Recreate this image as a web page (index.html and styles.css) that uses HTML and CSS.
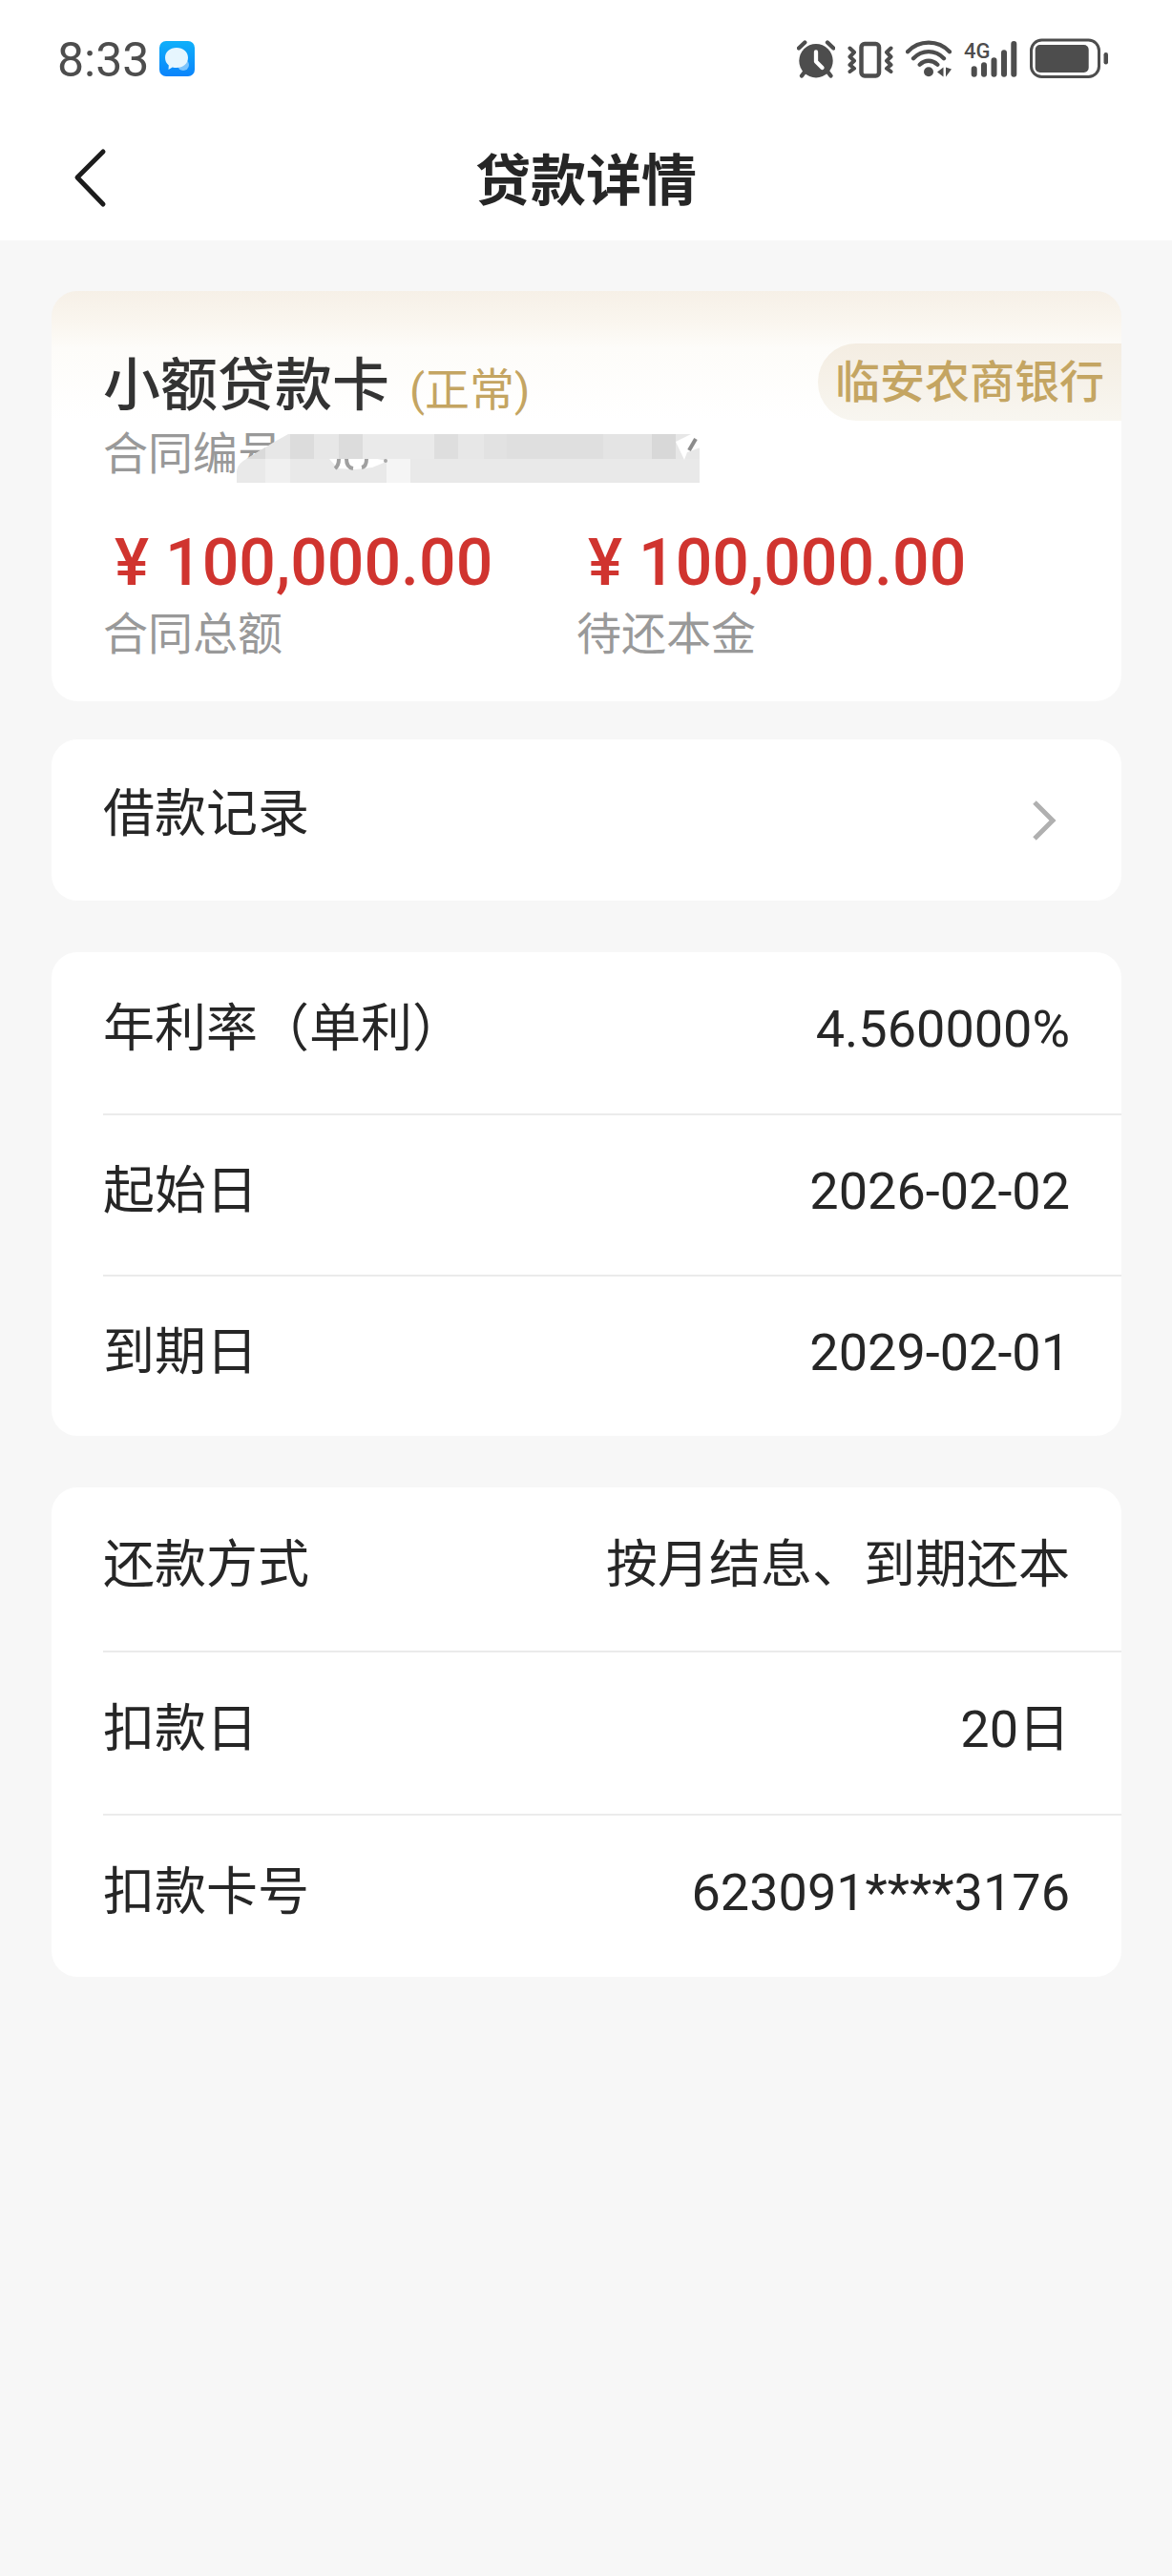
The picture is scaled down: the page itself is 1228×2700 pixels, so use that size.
FILE: index.html
```html
<!DOCTYPE html>
<html lang="zh-CN">
<head>
    <meta charset="UTF-8">
    <meta name="viewport" content="width=device-width, initial-scale=1.0">
    <title>贷款详情</title>
    <link rel="stylesheet" href="styles.css">
</head>
<body>
    <div class="status-bar">
        <span class="time">8:33</span>
        <svg class="app-icon" width="37" height="37" viewBox="0 0 37 37" aria-hidden="true">
            <defs>
                <linearGradient id="appBlue" x1="0" y1="0" x2="0" y2="1">
                    <stop offset="0" stop-color="#0fb0fa"/>
                    <stop offset="1" stop-color="#0b84fb"/>
                </linearGradient>
            </defs>
            <rect width="37" height="37" rx="7" fill="url(#appBlue)"/>
            <circle cx="25" cy="25" r="6" fill="#7cc4fc"/>
            <path d="M18 7c7 0 12 4.500 12 10.500S25 28 18 28c-1.500 0-3-.2-4.300-.6L9.500 30l.3-4.500C7.300 23.500 6 20.700 6 17.500 6 11.500 11 7 18 7z" fill="#e6f6fe"/>
        </svg>
        <div class="status-icons">
            <svg width="40" height="44" viewBox="0 0 40 44" aria-hidden="true">
                <circle cx="20" cy="24.700" r="17.700" fill="#4d4d4d"/>
                <path d="M2 11.500 8.300 5.500M32 5.500l6.300 6M8 36.500l-3 4M32.500 36.500l3 4" fill="none" stroke="#4d4d4d" stroke-width="4.300" stroke-linecap="round"/>
                <path d="M20 15.500v10l6.500 6.500" fill="none" stroke="#fff" stroke-width="4.300" stroke-linecap="round" stroke-linejoin="round"/>
            </svg>
            <svg width="48" height="44" viewBox="0 0 48 44" fill="none" stroke="#4d4d4d" aria-hidden="true">
                <rect x="14.500" y="7" width="18.500" height="33.500" rx="3.500" stroke-width="4.500"/>
                <path d="M2.500 11.500 7 15.800 2.500 20.500 7 24.700 2.500 29 7 32.700 2.500 36M45.500 11.500 41 15.800l4.500 4.700-4.500 4.200 4.500 4.300-4.500 3.700 4.500 3.300" stroke-width="4" stroke-linecap="round" stroke-linejoin="round"/>
            </svg>
            <svg width="48" height="44" viewBox="0 0 48 44" aria-hidden="true">
                <path d="M2 15.300C14 2.500 34 2.500 46 15.300M8 22.300c9-9.500 23-9.500 32 0M14.700 28.700c5.500-5.300 13-5.300 18.600 0" fill="none" stroke="#4d4d4d" stroke-width="4.300" stroke-linecap="round"/>
                <circle cx="24" cy="36.300" r="5" fill="#4d4d4d"/>
                <path d="M33 36.500 39.500 31.500v10zM42 31.500v10l6-8z" fill="#4d4d4d"/>
            </svg>
            <svg width="56" height="44" viewBox="0 0 56 44" aria-hidden="true">
                <text class="network" x="0" y="22">4G</text>
                <path d="M10.700 33.300v5.400M21 29.300v9.400M31.500 24.300v14.400M42 16.300v22.400M52.300 7v31.700" fill="none" stroke="#4d4d4d" stroke-width="6" stroke-linecap="round"/>
            </svg>
            <svg width="82" height="44" viewBox="0 0 82 44" aria-hidden="true">
                <rect x="1.500" y="3" width="71" height="38.500" rx="11" fill="none" stroke="#4d4d4d" stroke-width="3"/>
                <rect x="5.700" y="8" width="56" height="29" rx="5" fill="#4d4d4d"/>
                <rect x="77.500" y="16" width="4.500" height="12.500" rx="2.200" fill="#4d4d4d"/>
            </svg>
        </div>
    </div>

    <header class="nav">
        <button class="back" type="button" aria-label="返回">
            <svg width="36" height="64" viewBox="0 0 36 64" aria-hidden="true">
                <path d="M31 4 4 31l27 28" fill="none" stroke="#1c1c1c" stroke-width="5" stroke-linecap="round" stroke-linejoin="round"/>
            </svg>
        </button>
        <h1>贷款详情</h1>
    </header>

    <main>
        <section class="card summary">
            <div class="summary-head">
                <h2>小额贷款卡 <span class="state">(正常)</span></h2>
                <span class="bank">临安农商银行</span>
            </div>
            <div class="contract">
                合同编号
                <!-- pixelated cover over the contract number -->
                <svg class="mosaic" width="512" height="84" viewBox="0 0 512 84" aria-hidden="true">
                    <defs>
                        <clipPath id="coverShape">
                            <path d="M20 78V67q0-7 7-12L58 36l16-9h431v51z"/>
                        </clipPath>
                    </defs>
                    <g clip-path="url(#coverShape)">
                        <rect y="27" width="512" height="26" fill="#e7e7e7"/>
                        <rect y="53" width="512" height="25" fill="#e9e9e9"/>
                        <rect x="20" y="27" width="30" height="26" fill="#dadada"/>
                        <rect x="76" y="27" width="25" height="26" fill="#dcdcdc"/>
                        <rect x="127" y="27" width="25" height="26" fill="#dcdcdc"/>
                        <rect x="152" y="27" width="75" height="26" fill="#eaeaea"/>
                        <rect x="227" y="27" width="25" height="26" fill="#dedede"/>
                        <rect x="279" y="27" width="24" height="26" fill="#e2e2e2"/>
                        <rect x="303" y="27" width="101" height="26" fill="#dfdfdf"/>
                        <rect x="404" y="27" width="51" height="26" fill="#e4e4e4"/>
                        <rect x="455" y="27" width="25" height="26" fill="#d8d8d8"/>
                        <rect x="50" y="53" width="26" height="25" fill="#f0f0f0"/>
                        <rect x="177" y="53" width="25" height="25" fill="#f5f5f5"/>
                    </g>
                    <path d="M117 53h50l12 2-17 7-18 2-18-1z" fill="#fff"/>
                    <path d="M127 53q0 7-4 10M135 53q0 9 7 10M156 53q0 8-5 9" fill="none" stroke="#a0a0a0" stroke-width="4"/>
                    <circle cx="176" cy="55" r="2" fill="#a8a8a8"/>
                    <path d="M480 35l16-8h10v14l-14 5-3 8z" fill="#fff"/>
                    <path d="M494 44l7-12" fill="none" stroke="#8c8c8c" stroke-width="4"/>
                </svg>
            </div>
            <dl class="amounts">
                <div>
                    <dt>合同总额</dt>
                    <dd>¥ 100,000.00</dd>
                </div>
                <div>
                    <dt>待还本金</dt>
                    <dd>¥ 100,000.00</dd>
                </div>
            </dl>
        </section>

        <a class="card record-link" href="#records">
            <span>借款记录</span>
            <svg width="26" height="44" viewBox="0 0 26 44" aria-hidden="true">
                <path d="M3 3l19 19L3 41" fill="none" stroke="#b0b0b0" stroke-width="5"/>
            </svg>
        </a>

        <dl class="card details">
            <div class="row">
                <dt>年利率（单利）</dt>
                <dd>4.560000%</dd>
            </div>
            <div class="row">
                <dt>起始日</dt>
                <dd>2026-02-02</dd>
            </div>
            <div class="row">
                <dt>到期日</dt>
                <dd>2029-02-01</dd>
            </div>
        </dl>

        <dl class="card details repayment">
            <div class="row">
                <dt>还款方式</dt>
                <dd>按月结息、到期还本</dd>
            </div>
            <div class="row">
                <dt>扣款日</dt>
                <dd>20日</dd>
            </div>
            <div class="row">
                <dt>扣款卡号</dt>
                <dd>623091****3176</dd>
            </div>
        </dl>
    </main>
</body>
</html>
```

FILE: styles.css
```css
* {
    box-sizing: border-box;
}
body {
    font-family: Roboto, "Noto Sans CJK SC", sans-serif;
    margin: 0;
    min-height: 100vh;
    background-color: #f7f7f7;
    color: #262626;
    font-size: 54px;
    line-height: 80px;
}
h1, h2, dl, dt, dd {
    margin: 0;
}
svg {
    display: block;
}

/* status bar */
.status-bar {
    display: flex;
    align-items: center;
    height: 122px;
    padding: 0 67px 0 60px;
    background-color: #fff;
    color: #4d4d4d;
}
.time {
    padding-top: 4px;
    font-size: 50px;
    line-height: 60px;
}
.app-icon {
    margin-left: 11px;
}
.status-icons {
    display: flex;
    gap: 13px;
    margin-left: auto;
}
.network {
    font-size: 22px;
    font-weight: 500;
    fill: #4d4d4d;
}

/* title bar */
.nav {
    display: grid;
    grid-template-columns: 1fr auto 1fr;
    align-items: center;
    height: 130px;
    padding: 0 54px;
    background-color: #fff;
}
.nav h1 {
    padding-top: 6px;
    font-size: 58px;
    font-weight: 700;
}
.back {
    justify-self: start;
    padding: 0 23px;
    border: none;
    background: none;
    cursor: pointer;
}

main {
    padding: 53px 53px 0 54px;
}
.card {
    background-color: #fff;
    border-radius: 27px;
    overflow: hidden;
}

/* summary card */
.summary {
    padding: 55px 0 40px 54px;
    background-image: linear-gradient(to bottom, #f6f0e7, #faf6ef 34px, #fdfcf9 60px, #fff 136px);
}
.summary-head {
    display: flex;
    justify-content: space-between;
    align-items: center;
    height: 81px;
}
.summary-head h2 {
    padding-top: 8px;
    font-size: 60px;
    font-weight: 500;
    line-height: 72px;
    color: #333;
}
.state {
    margin-left: 6px;
    font-size: 47px;
    font-weight: 400;
    line-height: 60px;
    color: #c4a562;
}
.bank {
    padding: 0 18px;
    border-radius: 40px 0 0 40px;
    background-image: linear-gradient(to bottom, #f4ede2, #f8f6f0);
    color: #c4a562;
    font-size: 47px;
    font-weight: 500;
    line-height: 81px;
}
.contract {
    position: relative;
    margin-bottom: 34px;
    color: #999;
    font-size: 47px;
    line-height: 70px;
}
.mosaic {
    position: absolute;
    top: -13px;
    left: 120px;
}
.amounts {
    display: grid;
    grid-template-columns: 1fr 1fr;
    padding-right: 75px;
}
.amounts > div {
    display: flex;
    flex-direction: column-reverse;
}
.amounts dt {
    color: #999;
    font-size: 47px;
    line-height: 60px;
}
.amounts dd {
    padding-left: 12px;
    color: #d0342f;
    font-size: 68px;
    font-weight: 500;
    line-height: 90px;
}

/* loan record entry */
.record-link {
    display: flex;
    justify-content: space-between;
    align-items: center;
    height: 169px;
    margin-top: 40px;
    padding: 0 68px 0 54px;
    color: inherit;
    text-decoration: none;
}
.record-link span {
    padding-bottom: 12px;
}

/* detail lists */
.details {
    margin-top: 54px;
    padding-left: 54px;
}
.row {
    display: flex;
    justify-content: space-between;
    align-items: center;
    min-height: 169px;
    padding-right: 54px;
    padding-bottom: 8px;
}
.row + .row {
    border-top: 2px solid #ebebeb;
}
.repayment .row {
    min-height: 171px;
}
```
